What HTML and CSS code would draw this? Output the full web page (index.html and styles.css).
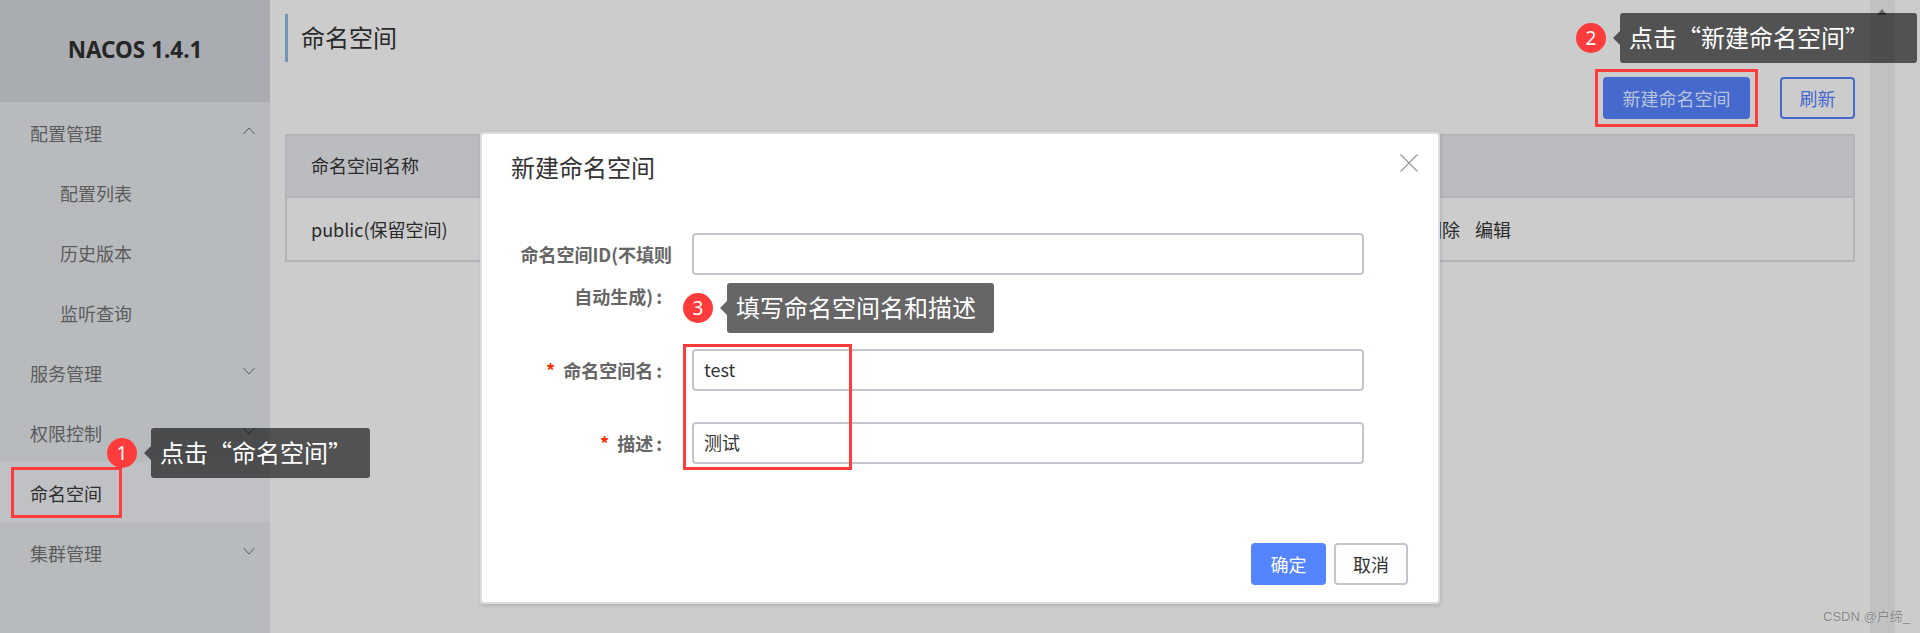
FILE: index.html
```html
<!DOCTYPE html>
<html lang="zh-CN">
<head>
<meta charset="utf-8">
<title>命名空间</title>
<link rel="stylesheet" href="styles.css">
</head>
<body>
<div class="app">
  <aside class="sidebar">
    <div class="brand">NACOS 1.4.1</div>
    <nav class="menu">
      <div class="item">配置管理<svg class="chev" viewBox="0 0 12 8"><path d="M.5 7 6 1l5.500 6"/></svg></div>
      <div class="item sub">配置列表</div>
      <div class="item sub">历史版本</div>
      <div class="item sub">监听查询</div>
      <div class="item">服务管理<svg class="chev" viewBox="0 0 12 8"><path d="M.5 1 6 7l5.500-6"/></svg></div>
      <div class="item">权限控制<svg class="chev" viewBox="0 0 12 8"><path d="M.5 1 6 7l5.500-6"/></svg></div>
      <div class="item active">命名空间</div>
      <div class="item">集群管理<svg class="chev" viewBox="0 0 12 8"><path d="M.5 1 6 7l5.500-6"/></svg></div>
    </nav>
  </aside>
  <main class="main">
    <h1 class="page-title">命名空间</h1>
    <div class="actions">
      <button class="btn btn-new">新建命名空间</button>
      <button class="btn btn-refresh">刷新</button>
    </div>
    <div class="table">
      <div class="thead">命名空间名称</div>
      <div class="trow">
        <span>public(保留空间)</span>
        <span class="ops"><span>删除</span><span>编辑</span></span>
      </div>
    </div>
  </main>
  <div class="scrollbar"><i class="scroll-up"></i></div>
</div>

<section class="modal">
  <h2 class="modal-title">新建命名空间</h2>
  <svg class="close" viewBox="0 0 18 18"><path d="M.5.5l17 17M17.500.5l-17 17"/></svg>
  <form class="form">
    <label class="label">命名空间ID(不填则<br>自动生成)<span class="colon">:</span></label>
    <div class="input"></div>
    <label class="label"><span class="req">*</span>命名空间名<span class="colon">:</span></label>
    <div class="input">test</div>
    <label class="label"><span class="req">*</span>描述<span class="colon">:</span></label>
    <div class="input">测试</div>
  </form>
  <div class="modal-foot">
    <button class="btn btn-ok">确定</button>
    <button class="btn btn-cancel">取消</button>
  </div>
</section>

<div class="note note-1"><span class="badge">1</span><span class="tip">点击“命名空间”</span></div>
<div class="note note-2"><span class="badge">2</span><span class="tip">点击“新建命名空间”</span></div>
<div class="note note-3"><span class="badge">3</span><span class="tip">填写命名空间名和描述</span></div>

<div class="mark mark-1"></div>
<div class="mark mark-2"></div>
<div class="mark mark-3"></div>

<div class="watermark">CSDN @户缔_</div>
</body>
</html>
```
FILE: styles.css
```css
* { box-sizing: border-box; }
html, body { margin: 0; height: 633px; overflow: hidden; }
body {
  position: relative;
  background: #cccccc;
  font-family: "Noto Sans CJK SC", "Noto Sans", sans-serif;
  color: #2a2a2a;
  font-size: 18px;
}
.app { display: flex; height: 633px; }

.sidebar { width: 270px; flex: none; background: #b7bbbe; }
.brand {
  height: 102px;
  background: #a9acb0;
  font-family: "Noto Sans", sans-serif;
  font-weight: 700;
  font-size: 22.500px;
  color: #262626;
  text-align: center;
  line-height: 100px;
}
.item {
  display: flex;
  align-items: center;
  justify-content: space-between;
  height: 60px;
  padding: 1px 15px 0 30px;
  color: #5c5c5c;
  line-height: 1;
}
.item.sub { padding-left: 60px; }
.item.active { background: #c0c1c5; color: #2e2e2e; }
.chev { width: 12px; height: 8px; margin-top: -4px; }
.chev path { fill: none; stroke: #5a5c5e; stroke-width: 1; }

.main { flex: 1; padding: 14px 65px 0 15px; min-width: 0; }
.page-title {
  margin: 0;
  height: 48px;
  border-left: 3px solid #7097b8;
  padding-left: 13px;
  font-size: 24px;
  font-weight: 400;
  line-height: 46px;
  color: #2a2a2a;
}
.actions { display: flex; justify-content: flex-end; gap: 30px; margin-top: 15px; }
.btn {
  font-family: inherit;
  font-size: 18px;
  height: 42px;
  padding: 0;
  border-radius: 4px;
  line-height: 1;
}
.btn-new { width: 147px; background: #4569cc; border: 0; color: #b9c3dd; }
.btn-refresh { width: 75px; background: transparent; border: 2px solid #4569cc; color: #4569cc; }
.table { margin-top: 15px; border: 2px solid #b3b3b8; height: 128px; }
.thead {
  height: 62px;
  background: #bbbcc0;
  border-bottom: 2px solid #b3b3b8;
  line-height: 58px;
  padding-left: 24px;
}
.trow {
  display: flex;
  justify-content: space-between;
  height: 62px;
  align-items: center;
  padding: 0 342px 0 24px;
  color: #2a2a2a;
}
.ops { display: flex; gap: 15px; }

.scrollbar { position: absolute; top: 0; bottom: 0; left: 1870px; width: 25px; background: #c1c1c1; }
.scroll-up {
  position: absolute; top: 9px; left: 7px;
  width: 0; height: 0;
  border-left: 5px solid transparent;
  border-right: 5px solid transparent;
  border-bottom: 6px solid #6c6c6c;
}

.modal {
  position: absolute;
  left: 480px; top: 132px;
  width: 960px; height: 472px;
  background: #fff;
  border-radius: 4px;
  border: 2px solid #dcdce2;
  box-shadow: 1px 2px 4px rgba(0, 0, 0, .12);
}
.modal-title {
  margin: 0;
  padding: 16px 0 0 29px;
  font-size: 24px;
  font-weight: 400;
  line-height: 34px;
  color: #333;
}
.close {
  position: absolute; right: 20px; top: 20px;
  width: 18px; height: 18px;
}
.close path { fill: none; stroke: #9b9b9b; stroke-width: 1.3; }
.form {
  display: grid;
  grid-template-columns: 172px 672px;
  column-gap: 20px;
  row-gap: 31.500px;
  margin-top: 49px;
  align-items: start;
  padding-left: 18px;
}
.label {
  font-weight: 700;
  font-size: 18px;
  line-height: 42px;
  color: #666;
  text-align: right;
  white-space: nowrap;
}
.colon { display: inline-block; margin: 0 10px 0 3px; }
.req { color: #ff3000; margin-right: 8px; }
.input {
  height: 42px;
  border: 2px solid #c4c6cf;
  border-radius: 4px;
  padding-left: 10px;
  line-height: 36px;
  font-size: 18px;
  color: #333;
  background: #fff;
}
.modal-foot {
  position: absolute;
  right: 30px; bottom: 17px;
  display: flex;
  gap: 8px;
}
.btn-ok { width: 75px; background: #5584ff; border: 0; color: #fff; }
.btn-cancel { width: 74px; background: #fff; border: 2px solid #c4c6cf; color: #333; }

.note { position: absolute; display: flex; align-items: center; height: 50px; }
.note-1 { left: 107px; top: 428px; }
.note-2 { left: 1576px; top: 13px; }
.note-3 { left: 683px; top: 283px; }
.badge {
  width: 30px; height: 30px;
  border-radius: 50%;
  background: #ff3b3b;
  color: #fff;
  font-family: "Noto Sans", sans-serif;
  font-size: 19px;
  line-height: 30px;
  text-align: center;
}
.tip {
  position: relative;
  margin-left: 14px;
  height: 50px;
  padding: 0 18px 0 9px;
  border-radius: 3px;
  background: rgba(0, 0, 0, .6);
  color: #fff;
  font-size: 24px;
  line-height: 48px;
  white-space: nowrap;
}
.note-2 .tip { padding-right: 48px; }
.tip::before {
  content: "";
  position: absolute;
  left: -7px; top: 18px;
  border-top: 7px solid transparent;
  border-bottom: 7px solid transparent;
  border-right: 7px solid rgba(0, 0, 0, .6);
}

.mark { position: absolute; border: 3px solid #ff3b3b; }
.mark-1 { left: 11px; top: 467px; width: 111px; height: 51px; }
.mark-2 { left: 1595px; top: 69px; width: 163px; height: 58px; }
.mark-3 { left: 683px; top: 344px; width: 169px; height: 126px; }

.watermark {
  position: absolute;
  left: 1823px; top: 608px;
  font-family: "Liberation Sans", "Noto Sans CJK SC", sans-serif;
  font-size: 13px;
  line-height: 18px;
  color: #858585;
  text-shadow: 0 0 1px #eee;
}
```
